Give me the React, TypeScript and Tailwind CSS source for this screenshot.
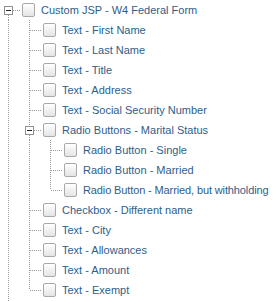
import React from "react";

type Cell = "blank" | "line" | "tee" | "elbow" | "rootExp" | "midExp";

const DOT = "#9a9a9a";

function TreeCell({ kind }: { kind: Cell }) {
  const x = 8.5;
  return (
    <svg width={21} height={20} viewBox="0 0 21 20" className="shrink-0 block" shapeRendering="crispEdges">
      {(kind === "line" || kind === "tee") && (
        <line x1={x} y1={0} x2={x} y2={20} stroke={DOT} strokeWidth={1} strokeDasharray="1 1" />
      )}
      {kind === "elbow" && (
        <line x1={x} y1={0} x2={x} y2={10} stroke={DOT} strokeWidth={1} strokeDasharray="1 1" />
      )}
      {(kind === "tee" || kind === "elbow") && (
        <line x1={x} y1={10.5} x2={21} y2={10.5} stroke={DOT} strokeWidth={1} strokeDasharray="1 1" />
      )}
      {kind === "midExp" && (
        <line x1={x} y1={0} x2={x} y2={6} stroke={DOT} strokeWidth={1} strokeDasharray="1 1" />
      )}
      {(kind === "rootExp" || kind === "midExp") && (
        <>
          <line x1={x} y1={15} x2={x} y2={20} stroke={DOT} strokeWidth={1} strokeDasharray="1 1" />
          <line x1={13} y1={10.5} x2={21} y2={10.5} stroke={DOT} strokeWidth={1} strokeDasharray="1 1" />
          <rect x={4.5} y={6.5} width={8} height={8} fill="#ffffff" stroke="#8f8f8f" strokeWidth={1} />
          <line x1={6} y1={10.5} x2={11} y2={10.5} stroke="#222" strokeWidth={1} />
        </>
      )}
    </svg>
  );
}

function Row({ cells, label, tight }: { cells: Cell[]; label: string; tight?: boolean }) {
  return (
    <div className="flex h-[20px] items-center">
      {cells.map((c, i) => (
        <TreeCell key={i} kind={c} />
      ))}
      <div className="ml-[1px] h-[14px] w-[13px] shrink-0 rounded-[2px] border border-[#a9a9a9] bg-gradient-to-b from-[#ffffff] to-[#e4e4e4]" />
      <span
        className={
          "ml-[6px] whitespace-nowrap text-[11px] leading-[20px] text-[#2f5d88] [font-family:'Liberation_Sans',Arial,sans-serif] " +
          (tight ? "tracking-[-0.12px]" : "")
        }
      >
        {label}
      </span>
    </div>
  );
}

export default function App() {
  const rows: { cells: Cell[]; label: string; tight?: boolean }[] = [
    { cells: ["rootExp"], label: "Custom JSP - W4 Federal Form" },
    { cells: ["line", "tee"], label: "Text - First Name" },
    { cells: ["line", "tee"], label: "Text - Last Name" },
    { cells: ["line", "tee"], label: "Text - Title" },
    { cells: ["line", "tee"], label: "Text - Address" },
    { cells: ["line", "tee"], label: "Text - Social Security Number" },
    { cells: ["line", "midExp"], label: "Radio Buttons - Marital Status" },
    { cells: ["line", "line", "tee"], label: "Radio Button - Single" },
    { cells: ["line", "line", "tee"], label: "Radio Button - Married" },
    { cells: ["line", "line", "elbow"], label: "Radio Button - Married, but withholding", tight: true },
    { cells: ["line", "tee"], label: "Checkbox - Different name" },
    { cells: ["line", "tee"], label: "Text - City" },
    { cells: ["line", "tee"], label: "Text - Allowances" },
    { cells: ["line", "tee"], label: "Text - Amount" },
    { cells: ["line", "elbow"], label: "Text - Exempt" },
  ];
  return (
    <div className="h-[301px] w-[273px] overflow-hidden bg-white">
      {rows.map((r, i) => (
        <Row key={i} cells={r.cells} label={r.label} tight={r.tight} />
      ))}
      <div className="flex h-[20px]">
        <TreeCell kind="line" />
      </div>
    </div>
  );
}
